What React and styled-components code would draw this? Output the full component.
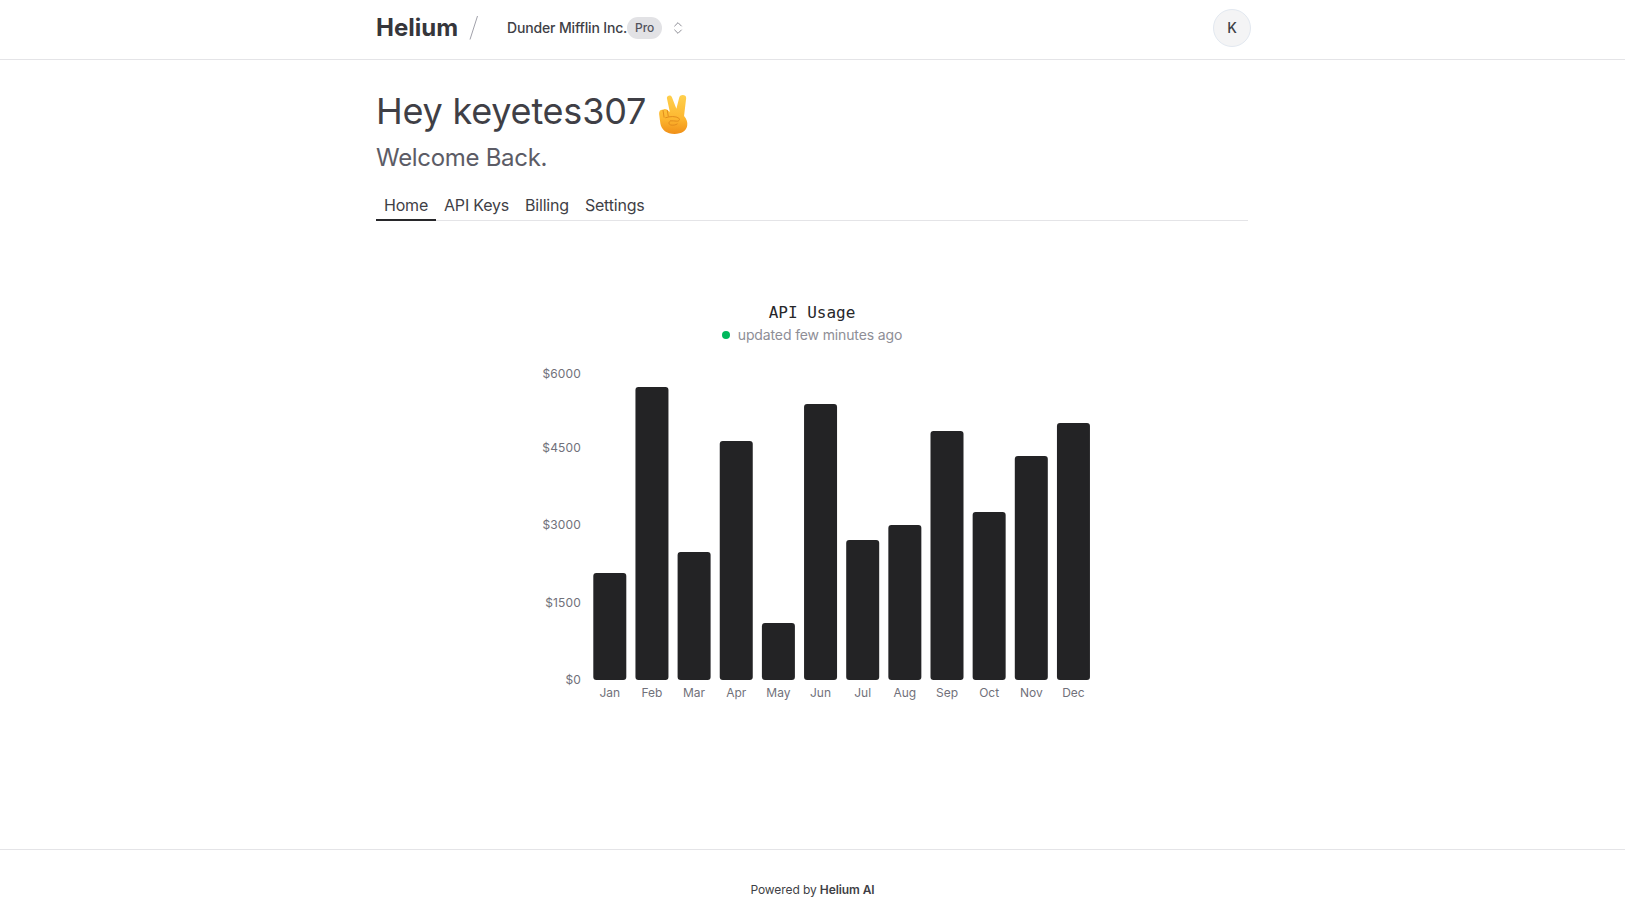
import React from 'react';
import styled, { createGlobalStyle } from 'styled-components';

const GlobalStyle = createGlobalStyle`
  html, body {
    margin: 0;
    padding: 0;
    background: #fff;
    font-family: Inter, "Liberation Sans", sans-serif;
    color: #27272a;
  }
  * { box-sizing: border-box; }
`

const Page = styled.div`
  min-height: 100vh;
  display: flex;
  flex-direction: column;
`

const TopBar = styled.header`
  height: 60px;
  border-bottom: 1px solid #e4e4e7;
  display: flex;
  align-items: center;
  padding: 0 374px 4px 376px;
`

const Logo = styled.span`
  font-size: 24px;
  font-weight: 700;
  color: #36363b;
`

const Slash = styled.svg`
  width: 12px;
  height: 26px;
  margin-left: 10px;
  margin-right: 27px;
`

const TeamName = styled.span`
  font-size: 14px;
  font-weight: 500;
  letter-spacing: -0.16px;
  color: #3f3f46;
`

const Badge = styled.span`
  height: 22px;
  width: 35px;
  border-radius: 11px;
  background: #e2e2e5;
  color: #52525b;
  font-size: 12px;
  font-weight: 500;
  display: flex;
  align-items: center;
  justify-content: center;
`

const Chevrons = styled.svg`
  width: 16px;
  height: 16px;
  margin-left: 8px;
  color: #8e8e96;
`

const Avatar = styled.div`
  margin-left: auto;
  width: 38px;
  height: 38px;
  border-radius: 50%;
  background: #f4f4f5;
  border: 1px solid #e2e8f0;
  font-size: 14px;
  font-weight: 500;
  color: #3f3f46;
  display: flex;
  align-items: center;
  justify-content: center;
`

const Main = styled.main`
  flex: 1;
  width: 872px;
  margin-left: 376px;
  padding-top: 31px;
`

const Title = styled.h1`
  margin: 0;
  font-size: 36px;
  line-height: 40px;
  font-weight: 400;
  letter-spacing: -0.22px;
  color: #3f3f46;
  display: flex;
  align-items: center;
`

const Peace = styled.svg`
  width: 30px;
  height: 40px;
  margin: 3px 0 -3px 12px;
`

const Subtitle = styled.h2`
  margin: 11px 0 0;
  font-size: 24px;
  line-height: 32px;
  font-weight: 400;
  letter-spacing: -0.3px;
  color: #5c5c66;
`

const Tabs = styled.nav`
  display: flex;
  margin-top: 17px;
  border-bottom: 1px solid #e4e4e7;
`

const Tab = styled.a`
  padding: 0 8px;
  height: 30px;
  font-size: 16px;
  line-height: 28px;
  letter-spacing: -0.2px;
  color: #3f3f46;
  margin-bottom: -1px;
  border-bottom: 2px solid ${p => (p.$active ? '#27272a' : 'transparent')};
`

const ChartBlock = styled.section`
  margin-top: 82px;
  display: flex;
  flex-direction: column;
  align-items: center;
`

const ChartTitle = styled.div`
  font-family: "DejaVu Sans Mono", monospace;
  font-size: 16px;
  line-height: 20px;
  color: #27272a;
`

const Status = styled.div`
  margin-top: 2px;
  display: flex;
  align-items: center;
  gap: 8px;
  font-size: 14px;
  line-height: 20px;
  letter-spacing: -0.13px;
  color: #8e8e96;
`

const Dot = styled.span`
  width: 8px;
  height: 8px;
  border-radius: 50%;
  background: #00b85c;
`

const ChartSvg = styled.svg`
  display: block;
  width: 600px;
  height: 350px;
  margin-top: 19px;
  text {
    font-family: Inter, "Liberation Sans", sans-serif;
    font-size: 12px;
    fill: #71717a;
  }
`

const TickLabel = styled.text`
  letter-spacing: 0.15px;
  text-anchor: end;
`

const MonthLabel = styled.text`
  text-anchor: middle;
`

const Footer = styled.footer`
  height: 73px;
  border-top: 1px solid #e4e4e7;
  padding-top: 32px;
  text-align: center;
  font-size: 12px;
  line-height: 16px;
  letter-spacing: -0.1px;
  color: #3f3f46;
  b { font-weight: 600; }
`

// top edge of each bar, page y; the svg starts at x=512 y=364
const BARS = [
  ['Jan', 573], ['Feb', 387], ['Mar', 552], ['Apr', 441], ['May', 623], ['Jun', 404],
  ['Jul', 540], ['Aug', 525], ['Sep', 431], ['Oct', 512], ['Nov', 456], ['Dec', 423],
];
const TICKS = [['$6000', 374], ['$4500', 448], ['$3000', 525], ['$1500', 603], ['$0', 680]];
const SVG_Y = 364;
const SVG_X = 512;
const BASE = 680;

export default function App() {
  return (
    <Page>
      <GlobalStyle />
      <TopBar>
        <Logo>Helium</Logo>
        <Slash viewBox="0 0 12 26">
          <path d="M9.500 1 2 24.500" stroke="#a1a1aa" strokeWidth="1" fill="none" />
        </Slash>
        <TeamName>Dunder Mifflin Inc.</TeamName>
        <Badge>Pro</Badge>
        <Chevrons viewBox="0 0 24 24" fill="none" stroke="currentColor" strokeWidth="1.500" strokeLinecap="round" strokeLinejoin="round">
          <path d="m7 15 5 5 5-5" />
          <path d="m7 9 5-5 5 5" />
        </Chevrons>
        <Avatar>K</Avatar>
      </TopBar>
      <Main>
        <Title>
          Hey keyetes307
          <Peace viewBox="0 0 28 38" role="img" aria-label="victory hand">
            <defs>
              <linearGradient id="hand" x1="0" y1="0" x2="0" y2="1">
                <stop offset="0" stopColor="#ffd04d" />
                <stop offset="0.6" stopColor="#fdb730" />
                <stop offset="1" stopColor="#f09018" />
              </linearGradient>
            </defs>
            <path d="M8.200 4C7.800 1.500 12 0 13 3l4.200 11L20 3c1-3 7-2.500 6.500 1l-2 17c2.500 3 3.500 6 3 9-.5 5-5.500 8-12 8C8 38 3 34 2 28L.8 19c-.3-3 1.700-4.500 3.700-4 1-1 2.500-1 4 0l2.500 2z" fill="url(#hand)" />
            <path d="M4.500 15.500 5.500 22M8.500 15.500l1 5.500M7 22.500c4-1.500 10-1.500 12.500.5 1.500 1.500 0 3-2 2.800-2-.2-4.500-.4-6-.3M11 26c-1.500 1-1 3 1 3.500 2 .4 4.500 0 6-1" fill="none" stroke="#e08a1c" strokeWidth="0.900" strokeLinecap="round" />
          </Peace>
        </Title>
        <Subtitle>Welcome Back.</Subtitle>
        <Tabs>
          <Tab $active>Home</Tab>
          <Tab>API Keys</Tab>
          <Tab>Billing</Tab>
          <Tab>Settings</Tab>
        </Tabs>
        <ChartBlock>
          <ChartTitle>API Usage</ChartTitle>
          <Status><Dot />updated few minutes ago</Status>
          <ChartSvg viewBox="0 0 600 350">
            {TICKS.map(([label, y]) => (
              <TickLabel key={label} x={581 - SVG_X} y={y - SVG_Y + 4}>{label}</TickLabel>
            ))}
            {BARS.map(([month, top], i) => {
              const x = 593.3 + i * 42.15 - SVG_X;
              return (
                <g key={month}>
                  <rect x={x} y={top - SVG_Y} width={33} height={BASE - top} rx={3} fill="#232325" />
                  <MonthLabel x={x + 16.5} y={BASE - SVG_Y + 17}>{month}</MonthLabel>
                </g>
              );
            })}
          </ChartSvg>
        </ChartBlock>
      </Main>
      <Footer>Powered by <b>Helium AI</b></Footer>
    </Page>
  );
}
